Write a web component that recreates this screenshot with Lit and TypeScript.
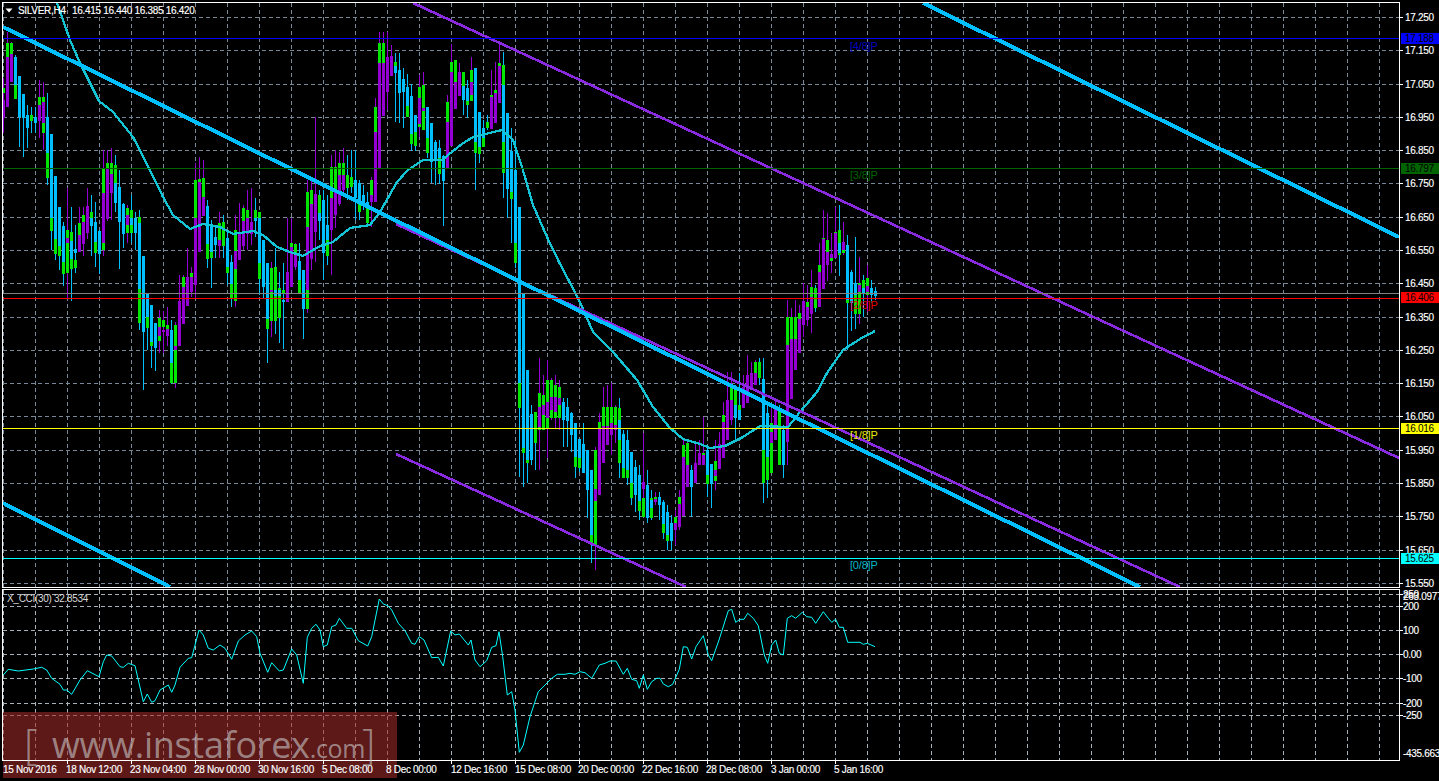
import { LitElement, html, svg, css } from "lit";
import { customElement } from "lit/decorators.js";

const W = 1439, PLOT_R = 1399, MAIN_T = 2.5, MAIN_B = 587.5, SUB_T = 589.5, SUB_B = 760.5;
const BLUE = "#00bfff", PURPLE = "#9400d3", GREEN = "#00e600";

// [high, low, colour, body top, body bottom, green top, green bottom]
type Bar = [number, number, string, number, number, number?, number?];
const bars: Bar[] = [
  [78,133,"p",100,118,88,93],[32,107,"p",57,107,43,57],[42,82,"p",54,82,43,57],[55,99,"b",57,85,85,99],
  [76,147,"b",76,117],[94,157,"b",94,118],[105,148,"b",115,128],[107,133,"g",0,0,115,121],
  [107,133,"b",117,123],[80,138,"p",105,121,97,105],[82,150,"p",102,123,97,133],[93,185,"b",117,153,153,178],
  [134,250,"b",134,218,218,231],[176,260,"b",176,239,239,254],[207,270,"b",207,246,246,256],[222,286,"b",226,262,262,274],
  [188,298,"p",238,243,230,273],[207,301,"b",241,259,232,269],[225,273,"b",249,253,260,268],[207,252,"p",235,252,223,252],
  [207,256,"p",222,244,215,222],[188,239,"p",206,233],[195,256,"b",218,226,212,218],[202,267,"b",222,242,242,253],
  [230,274,"b",231,254],[150,256,"p",193,243,168,250],[150,221,"p",168,219,163,168],[148,220,"p",174,193,163,190],
  [155,212,"b",183,203,165,203],[170,269,"b",187,222],[203,248,"b",204,234,230,234],[205,243,"p",215,225,208,233],
  [195,243,"b",218,225,210,233],[212,250,"b",218,233,218,233],[210,330,"b",223,289,217,323],[256,390,"b",256,332],
  [293,350,"b",293,317,317,328],[305,368,"b",305,342,342,346],[323,371,"b",323,348],[310,353,"p",327,336,318,341],
  [311,353,"p",330,332,320,327],[307,346,"p",329,336,325,332],[320,384,"b",330,363,363,383],[322,388,"p",346,350,325,383],
  [275,346,"p",301,346],[275,324,"p",287,324,277,287],[248,306,"p",277,306],[267,297,"p",277,292,273,277],
  [163,298,"p",218,285,180,218],[157,252,"p",182,252,179,200],[160,216,"p",197,216,178,216],[200,268,"b",206,244,244,259],
  [220,288,"b",225,252,252,258],[225,258,"b",237,245],[212,258,"p",240,246,223,246],[215,258,"g",0,0,222,246],
  [230,285,"b",238,267,267,273],[255,307,"b",262,284,284,298],[215,307,"p",251,269,230,301],[203,260,"p",233,260],
  [205,250,"p",221,246,208,221],[190,250,"p",218,234,210,218],[188,245,"p",222,234],[198,237,"b",218,221,210,218],
  [212,295,"b",218,263,212,279],[240,298,"b",240,287],[263,363,"b",263,319,319,329],[262,337,"p",290,292,268,321],
  [248,334,"b",290,296,267,321],[272,343,"b",290,296,288,318],[263,349,"b",300,302,290,293],[218,302,"p",272,302],
  [218,287,"p",247,287,243,247],[243,270,"p",253,267,244,253],[243,293,"b",261,280,280,293],[270,339,"b",270,309],
  [180,313,"p",227,290,192,309],[180,270,"p",204,259,190,204],[117,262,"p",194,232],[190,240,"b",213,221,195,221],
  [190,280,"b",200,253],[195,265,"b",225,240,240,256],[155,275,"p",198,230,167,198],[150,228,"p",190,215,167,190],
  [152,206,"p",175,204,163,180],[148,195,"p",175,190,163,175],[155,200,"g",0,0,175,188],[150,193,"g",0,0,177,187],
  [150,220,"b",180,198],[180,220,"b",183,202,202,212],[185,210,"b",195,205],[192,227,"b",202,208,208,223],
  [177,227,"p",195,202,180,195],[98,202,"p",132,202,107,132],[32,168,"p",63,168,43,63],[32,116,"p",63,116,43,63],
  [32,110,"p",57,92],[45,76,"p",56,76],[53,122,"b",66,73,62,68],[53,123,"b",70,93],
  [68,128,"b",79,92],[74,117,"b",87,106,106,117],[84,151,"b",96,134,134,144],[115,151,"b",115,132,132,146],
  [75,137,"p",98,124,87,127],[72,125,"p",108,111,85,130],[107,158,"b",107,138,138,153],[123,183,"b",123,162],
  [140,185,"b",142,160],[140,184,"b",148,158,158,174],[155,226,"b",156,181],[95,168,"p",122,168,102,122],
  [44,146,"p",72,146,62,72],[60,109,"p",82,109,60,82],[63,96,"p",72,96],[72,115,"b",86,100,72,100],
  [80,118,"b",88,101,101,105],[57,101,"p",82,95,70,101],[68,190,"b",68,142,142,153],[112,163,"b",112,147,147,154],
  [120,147,"b",128,138,138,147],[115,130,"g",0,0,122,128],[70,129,"p",97,129,95,100],[62,123,"p",93,123,90,95],
  [42,103,"p",66,103,63,68],[52,198,"b",85,142,65,173],[113,218,"b",113,189],[128,243,"b",151,192,192,199],
  [140,268,"b",170,243,243,263],[207,477,"b",207,383,383,408],[293,487,"b",293,448,448,453],[370,483,"b",370,460,460,463],
  [405,465,"b",414,460],[412,470,"g",0,0,412,443],[358,470,"p",407,427,393,430],[375,430,"p",405,415,395,430],
  [360,458,"p",402,418,380,428],[378,420,"p",397,410,380,418],[375,428,"p",397,412,385,418],[380,430,"p",398,405,387,418],
  [398,447,"b",402,420],[398,447,"b",407,421],[412,452,"b",413,435],[423,478,"b",423,457,457,467],
  [439,472,"b",439,458,458,468],[423,473,"b",444,473],[450,518,"b",450,490],[470,563,"b",470,535,535,545],
  [447,570,"p",489,501,450,545],[413,495,"p",428,495,422,428],[387,463,"p",426,463,407,426],[385,445,"p",426,445,407,426],
  [383,455,"p",423,435,407,423],[405,443,"p",425,430,407,425],[398,478,"b",420,440,408,463],[430,478,"b",434,468,468,478],
  [430,485,"b",440,470,444,478],[452,505,"b",452,483,483,498],[460,512,"b",467,495],[465,520,"b",475,501,501,511],
  [433,517,"p",482,489,498,517],[470,523,"b",485,518],[490,520,"b",500,508,498,518],[492,505,"p",499,502,497,500],
  [492,520,"b",497,505],[500,539,"b",502,524,524,533],[505,550,"b",512,535,535,541],[515,550,"b",523,541],
  [510,545,"p",523,530,517,523],[490,530,"p",504,527,497,504],[440,516,"p",457,516,445,457],[442,487,"p",465,487,443,465],
  [465,517,"b",470,487],[443,483,"p",463,483],[440,465,"p",453,465,453,465],[417,465,"p",455,465,453,465],
  [445,497,"b",450,475,475,484],[464,508,"b",464,484],[440,490,"p",470,476,461,481],[432,469,"p",444,469],
  [402,458,"p",422,458,415,422],[372,440,"p",400,440],[372,425,"p",400,420,388,415],[385,440,"b",405,418,390,418],
  [373,420,"b",410,420,405,420],[375,408,"p",387,408],[355,403,"p",375,403],[362,388,"p",373,388],
  [360,385,"p",373,385,362,373],[358,385,"g",0,0,362,378],[358,503,"b",379,450,450,483],[405,498,"b",413,457,457,480],
  [405,473,"p",432,443,423,473],[400,440,"p",408,440],[405,465,"g",0,0,408,465],[425,478,"b",430,465],
  [300,465,"p",345,442,317,345],[308,399,"p",339,399,317,339],[300,370,"p",339,370,317,339],[305,353,"p",319,353,313,319],
  [283,337,"p",301,325],[285,326,"p",307,320,302,307],[270,333,"p",297,314,287,308],[285,312,"g",0,0,288,308],
  [243,307,"p",272,307,265,272],[210,289,"p",239,289,238,240],[213,281,"p",252,265,240,265],[233,273,"p",254,258,258,261],
  [207,258,"p",233,258,232,258],[205,276,"b",243,253,230,255],[222,255,"p",242,250,250,253],[235,350,"b",245,300,300,303],
  [270,331,"b",272,303],[237,329,"b",283,295,295,314],[257,324,"p",285,292,283,314],[275,317,"b",288,293,280,288],
  [265,312,"p",286,292,278,295],[280,303,"b",288,295],[287,300,"b",291,296],
];

const ma = "57,3 70,40 80,63 99,101 113,112 133,137 150,170 163,197 173,215 190,229 203,224 220,227 233,234 253,231 263,235 277,247 290,252 303,256 320,246 333,242 350,228 370,225 380,212 397,182 408,170 423,160 443,160 448,155 462,144 473,137 502,130 513,140 522,167 533,205 547,237 559,262 579,300 593,332 613,352 637,380 653,407 670,428 683,439 700,444 710,448 725,446 743,437 760,426 788,427 800,412 817,392 827,373 843,350 860,339 875,331";

const cciA = [10,285,25,268,55,273,100,267,125,262,140,270,155,295,180,313,190,330,200,330,215,343,240,300,262,272,297,290,310,245,320,225,335,228,360,260,370,262,385,250,405,257,430,365,442,342,455,367,465,362,480,330,505,315,515,337,525,315,540,262,565,235,575,233,597,150,610,165,625,205,640,210,660,195,675,205,695,238,715,183,735,165,755,153,770,170,780,220,803,277,815,248,838,273,850,270,875,207,890,225,910,310,922,172,935,145,948,133,960,150,970,200,982,195,995,140,1008,135,1018,115,1040,145,1055,145,1075,182,1103,198,1115,170,1138,57,1150,72,1165,78,1175,90,1195,130,1215,152,1235,190,1245,193,1258,170,1272,180,1295,233,1315,232,1330,258,1352,153,1365,165,1378,162,1405,195,1413,180,1425,240,1440,260];
const cciB = [0,225,20,212,35,172,48,167,57,125,68,200,82,315,95,305,105,360,118,487,130,465,150,380,175,305,195,285,215,265,232,253,255,253,270,250,285,253,300,245,315,248,335,265,358,225,375,220,390,213,408,213,430,253,442,235,455,268,470,272,478,295,490,255,502,298,515,275,530,265,540,265,550,282,565,290,578,283,598,238,610,170,622,172,635,207,648,170,670,137,685,195,695,212,717,150,745,62,755,58,767,97,780,88,792,88,803,70,820,85,835,107,853,195,863,220,875,165,887,150,898,190,910,195,922,85,935,77,947,85,967,67,980,80,995,82,1007,100,1030,65,1045,85,1055,97,1067,88,1078,112,1090,112,1103,157,1140,157,1150,163,1162,160,1185,170];
const cciPts = (): string => {
  const out: string[] = [];
  for (let i = 0; i < cciA.length; i += 2) out.push(`${(cciA[i] / 3).toFixed(1)},${(580 + cciA[i + 1] / 3).toFixed(1)}`);
  for (let i = 2; i < cciB.length; i += 2) out.push(`${(480 + cciB[i] / 3).toFixed(1)},${(590 + cciB[i + 1] / 3).toFixed(1)}`);
  return out.join(" ");
};

const priceY = (p: number) => 17 + (17.25 - p) * 332.9;
const prices = Array.from({ length: 18 }, (_, i) => 17.25 - i * 0.1);
const subLevels: [string, number][] = [["200", 606.5], ["100", 630.5], ["0.00", 654.5], ["-100", 678.5], ["-200", 703.5], ["-250", 715.5]];
const tags: [string, number, string, string][] = [
  ["17.188", 38.5, "#0000ff", "#000000"],
  ["16.797", 168.5, "#006400", "#000000"],
  ["16.406", 298, "#ff0000", "#000000"],
  ["16.016", 428.5, "#ffff00", "#000000"],
  ["15.625", 558.5, "#00ffff", "#000000"],
];
const murrey: [string, number, string][] = [
  ["[4/8]P", 50, "#0000c0"],
  ["[3/8]P", 179, "#006400"],
  ["[2/8]P", 309, "#e00000"],
  ["[1/8]P", 439, "#e8e800"],
  ["[0/8]P", 569, "#00b8c8"],
];
const timeLabels: [string, number][] = [
  ["15 Nov 2016", 3], ["18 Nov 12:00", 66], ["23 Nov 04:00", 130], ["28 Nov 00:00", 194], ["30 Nov 16:00", 258],
  ["5 Dec 08:00", 322], ["8 Dec 00:00", 386], ["12 Dec 16:00", 451], ["15 Dec 08:00", 515], ["20 Dec 00:00", 578],
  ["22 Dec 16:00", 642], ["28 Dec 08:00", 706], ["3 Jan 00:00", 771], ["5 Jan 16:00", 834],
];
const vGrid = Array.from({ length: 44 }, (_, i) => 3.5 + 32 * i);

@customElement("app-root")
export class AppRoot extends LitElement {
  static styles = css`
    :host { display: block; width: 1439px; height: 781px; background: #000; overflow: hidden; }
    .chart { display: block; width: 1439px; height: 781px; background: #000; }
    .grid { stroke: #778899; stroke-width: 1; stroke-dasharray: 4 3; shape-rendering: crispEdges; }
    .grid.sub { stroke: #a8b0b8; }
    .crisp { shape-rendering: crispEdges; }
    .frame { fill: none; stroke: #fff; stroke-width: 1; shape-rendering: crispEdges; }
    .axis { font: 10px "Liberation Sans", Arial, sans-serif; letter-spacing: -0.3px; fill: #fff; stroke: #fff; stroke-width: 0.15px; }
    .axis.mute { fill: #d8d8d8; stroke: none; }
    .tagtxt { font: 10px "Liberation Sans", Arial, sans-serif; letter-spacing: -0.3px; }
    .murrey { font: 11px "Liberation Sans", Arial, sans-serif; letter-spacing: -0.2px; }
    .wm-box { fill: #a02a2a; fill-opacity: 0.58; }
    .wm { font-family: "Open Sans", "Noto Sans", sans-serif; fill: #c8c8c8; fill-opacity: 0.62; }
    .wm-main { font-size: 36px; letter-spacing: -0.3px; }
    .wm-com { font-size: 25px; }
    .wm-br { font-size: 42px; font-weight: 300; }
  `;

  private renderBars() {
    return bars.map((b, k) => {
      const [h, l, c, t, bt, gt, gb] = b;
      const x = 2 + 4 * k;
      const colour = c === "p" ? PURPLE : BLUE;
      return svg`
        <rect x=${x + 1} y=${h} width="1" height=${Math.max(l - h, 0)} fill=${colour}></rect>
        ${gt !== undefined ? svg`<rect x=${x} y=${gt} width="3" height=${(gb as number) - gt} fill=${GREEN}></rect>` : ""}
        ${c !== "g" ? svg`<rect x=${x} y=${t} width="3" height=${Math.max(bt - t, 1)} fill=${colour}></rect>` : ""}
      `;
    });
  }

  render() {
    return html`
      <svg class="chart" viewBox="0 0 ${W} 781" xmlns="http://www.w3.org/2000/svg">
        <defs>
          <clipPath id="main"><rect x="3" y="3" width="1396" height="584"></rect></clipPath>
          <clipPath id="sub"><rect x="3" y="590" width="1396" height="170"></rect></clipPath>
        </defs>

        <g clip-path="url(#main)">
          ${vGrid.map((x) => svg`<line class="grid" x1=${x} x2=${x} y1="3" y2="587"></line>`)}
          ${prices.map((p) => svg`<line class="grid" x1="3" x2=${PLOT_R} y1=${Math.round(priceY(p)) + 0.5} y2=${Math.round(priceY(p)) + 0.5}></line>`)}
          <g class="crisp">${this.renderBars()}</g>
          <polyline points=${ma} fill="none" stroke="#14c4d4" stroke-width="2.3" class="crisp"></polyline>
          <line class="crisp" x1="413" y1="3" x2="1399" y2="458" stroke="#8a2be2" stroke-width="2.6"></line>
          <line class="crisp" x1="396" y1="224" x2="1180" y2="587" stroke="#8a2be2" stroke-width="2.6"></line>
          <line class="crisp" x1="396" y1="454" x2="686" y2="587" stroke="#8a2be2" stroke-width="2.6"></line>
          <line class="crisp" x1="3" y1="27" x2="1140" y2="587" stroke=${BLUE} stroke-width="4"></line>
          <line class="crisp" x1="923" y1="3" x2="1399" y2="237" stroke=${BLUE} stroke-width="4"></line>
          <line class="crisp" x1="3" y1="503" x2="170" y2="587" stroke=${BLUE} stroke-width="4"></line>
          <line class="crisp" x1="3" x2="1399" y1="293.5" y2="293.5" stroke="#808080"></line>
          <line class="crisp" x1="3" x2="1399" y1="38.5" y2="38.5" stroke="#0000ff"></line>
          <line class="crisp" x1="3" x2="1399" y1="168.5" y2="168.5" stroke="#006400"></line>
          <line class="crisp" x1="3" x2="1399" y1="298.5" y2="298.5" stroke="#ff0000"></line>
          <line class="crisp" x1="3" x2="1399" y1="428.5" y2="428.5" stroke="#ffff00"></line>
          <line class="crisp" x1="3" x2="1399" y1="558.5" y2="558.5" stroke="#00ffff"></line>
          ${murrey.map(([t, y, c]) => svg`<text class="murrey" x="850" y=${y} fill=${c}>${t}</text>`)}
        </g>

        <g clip-path="url(#sub)">
          ${vGrid.map((x) => svg`<line class="grid sub" x1=${x} x2=${x} y1="590" y2="760"></line>`)}
          ${[594.5, ...subLevels.map((s) => s[1])].map((y) => svg`<line class="grid sub" x1="3" x2=${PLOT_R} y1=${y} y2=${y}></line>`)}
          <polyline points=${cciPts()} fill="none" stroke="#00ffff" stroke-width="1"></polyline>
        </g>

        <rect class="wm-box" x="3" y="712" width="394" height="66"></rect>

        <rect class="frame" x="2.5" y=${MAIN_T} width="1397" height=${MAIN_B - MAIN_T}></rect>
        <rect class="frame" x="2.5" y=${SUB_T} width="1397" height=${SUB_B - SUB_T}></rect>

        ${prices.map((p) => {
          const y = Math.round(priceY(p)) + 0.5;
          return svg`<line class="crisp" x1="1400" x2="1403" y1=${y} y2=${y} stroke="#fff"></line>
            <text class="axis" x="1405" y=${y + 3.5}>${p.toFixed(3)}</text>`;
        })}
        ${tags.map(([t, y, bg, fg]) => svg`
          <rect class="crisp" x="1401" y=${Math.round(y) - 6} width="38" height="11" fill=${bg}></rect>
          <text class="tagtxt" x="1405" y=${Math.round(y) + 3} fill=${fg}>${t}</text>`)}

        ${subLevels.map(([t, y]) => svg`
          <line class="crisp" x1="1400" x2="1403" y1=${y} y2=${y} stroke="#fff"></line>
          <text class="axis" x="1403" y=${y + 3.5}>${t}</text>`)}
        <line class="crisp" x1="1400" x2="1403" y1="594.5" y2="594.5" stroke="#fff"></line>
        <text class="axis" x="1403" y="598">250</text>
        <text class="axis" x="1403" y="600">263.0977</text>
        <text class="axis" x="1403" y="757">-435.663</text>

        ${vGrid.filter((_, i) => i % 2 === 0 && i > 0 && 3.5 + 32 * i < 880).map((x) => svg`<line class="crisp" x1=${x} x2=${x} y1="761" y2="764" stroke="#fff"></line>`)}
        ${timeLabels.map(([t, x]) => svg`<text class="axis" x=${x} y="773">${t}</text>`)}

        <polygon points="5.5,8.5 12.5,8.5 9,12.5" fill="#fff"></polygon>
        <text class="axis" x="18" y="14">SILVER,H4</text>
        <text class="axis" x="72" y="14">16.415 16.440 16.385 16.420</text>
        <text class="axis mute" x="7" y="602">X_CCI(30) 32.8534</text>

        <text class="wm wm-br" x="24" y="759">[</text>
        <text class="wm wm-main" x="52" y="758">www.instaforex<tspan class="wm-com">.com</tspan></text>
        <text class="wm wm-br" x="362" y="759">]</text>
      </svg>
    `;
  }
}
